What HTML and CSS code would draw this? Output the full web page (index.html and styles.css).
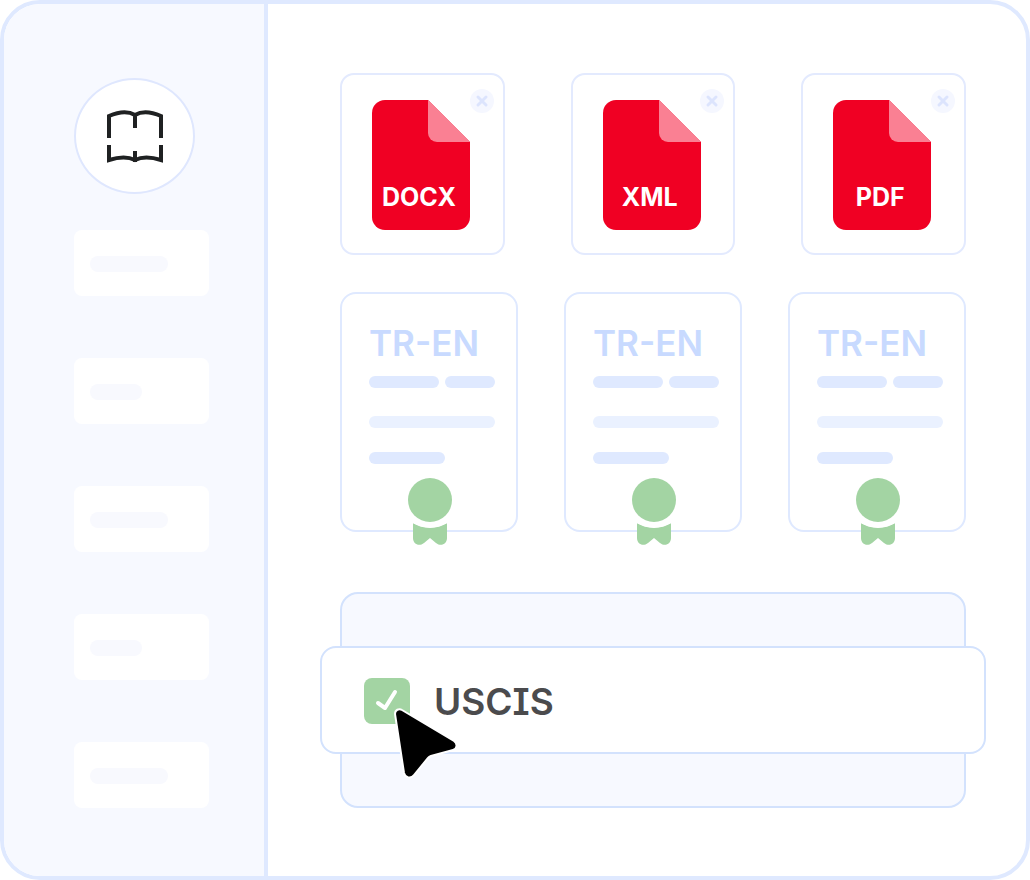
FILE: index.html
```html
<!DOCTYPE html>
<html lang="en">
<head>
    <meta charset="UTF-8">
    <meta name="viewport" content="width=device-width, initial-scale=1.0">
    <title>Translations</title>
    <link rel="stylesheet" href="styles.css">
</head>

<body>
    <!-- Shared shapes -->
    <svg class="sprite" aria-hidden="true">
        <symbol id="file" viewBox="0 0 98 130">
            <path d="M13 0H56L98 42V117a13 13 0 0 1-13 13H13a13 13 0 0 1-13-13V13A13 13 0 0 1 13 0z" fill="#f00023"/>
            <path d="M56 0L98 42H65a9 9 0 0 1-9-9z" fill="#fa8093"/>
        </symbol>
        <symbol id="cross" viewBox="0 0 24 24">
            <path d="M8 8L16 16M16 8L8 16" fill="none" stroke="#dce4fd" stroke-width="3" stroke-linecap="round"/>
        </symbol>
        <symbol id="ribbon" viewBox="0 0 44 67">
            <circle cx="22" cy="22" r="22" fill="#a3d4a3"/>
            <path d="M5 45Q22 54 39 45V60C39 66 33 69 28 65L22 60L16 65C11 69 5 66 5 60z" fill="#a3d4a3"/>
            <path d="M3 43Q22 55 41 43" fill="none" stroke="#fff" stroke-width="2"/>
        </symbol>
    </svg>

    <div class="frame">
        <aside class="sidebar">
            <div class="logo">
                <svg width="56" height="54" viewBox="0 0 56 54" fill="none" stroke="#1f2122" stroke-width="4">
                    <path d="M2 29V7Q18 0 28 6Q38 0 54 7V29M28 5V19"/>
                    <path d="M2 36V51Q18 46 28 51Q38 46 54 51V36M28 53V42"/>
                </svg>
            </div>
            <nav class="menu">
                <div class="menu-item"><span class="long"></span></div>
                <div class="menu-item"><span></span></div>
                <div class="menu-item"><span class="long"></span></div>
                <div class="menu-item"><span></span></div>
                <div class="menu-item"><span class="long"></span></div>
            </nav>
        </aside>

        <main class="content">
            <div class="files">
                <div class="file-card">
                    <div class="file-icon"><svg><use href="#file"/></svg><span>DOCX</span></div>
                    <button class="close" aria-label="Remove DOCX"><svg><use href="#cross"/></svg></button>
                </div>
                <div class="file-card">
                    <div class="file-icon"><svg><use href="#file"/></svg><span>XML</span></div>
                    <button class="close" aria-label="Remove XML"><svg><use href="#cross"/></svg></button>
                </div>
                <div class="file-card">
                    <div class="file-icon"><svg><use href="#file"/></svg><span>PDF</span></div>
                    <button class="close" aria-label="Remove PDF"><svg><use href="#cross"/></svg></button>
                </div>
            </div>

            <div class="docs">
                <div class="doc">
                    <h2>TR-EN</h2>
                    <div class="line split"><i></i><i></i></div>
                    <div class="line light"></div>
                    <div class="line short"></div>
                    <svg class="ribbon"><use href="#ribbon"/></svg>
                </div>
                <div class="doc">
                    <h2>TR-EN</h2>
                    <div class="line split"><i></i><i></i></div>
                    <div class="line light"></div>
                    <div class="line short"></div>
                    <svg class="ribbon"><use href="#ribbon"/></svg>
                </div>
                <div class="doc">
                    <h2>TR-EN</h2>
                    <div class="line split"><i></i><i></i></div>
                    <div class="line light"></div>
                    <div class="line short"></div>
                    <svg class="ribbon"><use href="#ribbon"/></svg>
                </div>
            </div>

            <div class="stack">
                <div class="option">
                    <div class="check">
                        <input type="checkbox" id="uscis" checked>
                        <svg class="tick" viewBox="0 0 46 46"><path d="M14 25L21 30L31 14" fill="none" stroke="#fff" stroke-width="4" stroke-linecap="round" stroke-linejoin="round"/></svg>
                        <svg class="pointer" viewBox="0 0 64 74">
                            <path d="M1 6C1 2 5 0 8 2L60 33C64 36 63 41 59 42L37 48Q35 49 34 50L20 67C17 71 11 70 10 65z" fill="#000" stroke="#fff" stroke-width="2"/>
                        </svg>
                    </div>
                    <label for="uscis">USCIS</label>
                </div>
            </div>
        </main>
    </div>
</body>

</html>
```
FILE: styles.css
```css
/* General styles */
* {
    box-sizing: border-box;
}

body {
    margin: 0;
    font-family: Inter, "Liberation Sans", sans-serif;
    background-color: #fff;
}

svg {
    display: block;
}

.sprite {
    position: absolute;
    width: 0;
    height: 0;
}

.frame {
    display: flex;
    min-height: 100vh;
    border: 4px solid #dfe9ff;
    border-radius: 40px;
    background-color: #fff;
    overflow: hidden;
}

/* Sidebar */
.sidebar {
    flex: none;
    width: 264px;
    padding: 74px 55px 66px 70px;
    border-right: 4px solid #dfe9ff;
    background-color: #f7f9ff;
}

.logo {
    display: flex;
    align-items: center;
    justify-content: center;
    width: 121px;
    height: 116px;
    margin-bottom: 36px;
    border: 2px solid #dfe7fe;
    border-radius: 50%;
    background-color: #fff;
}

.menu {
    display: flex;
    flex-direction: column;
    gap: 62px;
}

.menu-item {
    padding: 26px 16px 24px;
    border-radius: 8px;
    background-color: #fff;
}

.menu-item span {
    display: block;
    width: 52px;
    height: 16px;
    border-radius: 8px;
    background-color: #f8f9fe;
}

.menu-item .long {
    width: 78px;
}

/* Main area */
.content {
    flex: 1;
    padding: 69px 60px 68px 72px;
}

.files {
    display: grid;
    grid-template-columns: repeat(3, 1fr);
    gap: 66px;
    margin-bottom: 37px;
}

.file-card {
    position: relative;
    padding: 25px 30px 23px;
    border: 2px solid #e3eafe;
    border-radius: 14px;
}

.file-icon {
    display: grid;
    width: 98px;
    height: 130px;
}

.file-icon svg,
.file-icon span {
    grid-area: 1 / 1;
    width: 98px;
    height: 130px;
}

.file-icon span {
    padding: 81px 4px 0 0;
    color: #fff;
    font-size: 25px;
    font-weight: 700;
    line-height: 32px;
    text-align: center;
}

.close {
    position: absolute;
    top: 14px;
    right: 9px;
    width: 24px;
    height: 24px;
    padding: 0;
    border: none;
    border-radius: 50%;
    background-color: #f5f7ff;
    cursor: pointer;
}

.close svg {
    width: 24px;
    height: 24px;
}

/* Translated documents */
.docs {
    display: grid;
    grid-template-columns: repeat(3, 1fr);
    gap: 46px;
    margin-bottom: 60px;
}

.doc {
    position: relative;
    padding: 29px 21px 66px 27px;
    border: 2px solid #dfe9ff;
    border-radius: 16px;
}

.doc h2 {
    margin: 0 0 13px;
    color: #c8daff;
    font-size: 35px;
    font-weight: 600;
    line-height: 40px;
    white-space: nowrap;
}

.line {
    height: 12px;
    border-radius: 6px;
    background-color: #dfe9ff;
}

.split {
    display: grid;
    grid-template-columns: 7fr 5fr;
    gap: 6px;
    background: none;
}

.split i {
    border-radius: 6px;
    background-color: #dfe9ff;
}

.light {
    margin: 28px 0 24px;
    background-color: #eaf1ff;
}

.short {
    width: 60%;
}

.ribbon {
    position: absolute;
    bottom: -15px;
    left: calc(50% - 21px);
    width: 44px;
    height: 67px;
}

/* Selected option */
.stack {
    padding: 52px 0;
    border: 2px solid #d3e2fd;
    border-radius: 18px;
    background-color: #f7f9ff;
}

.option {
    display: flex;
    align-items: center;
    gap: 24px;
    margin: 0 -22px;
    padding: 30px 42px 28px;
    border: 2px solid #d3e2fd;
    border-radius: 16px;
    background-color: #fff;
}

.check {
    position: relative;
    width: 46px;
    height: 46px;
}

.check input {
    appearance: none;
    width: 46px;
    height: 46px;
    margin: 0;
    border-radius: 8px;
    background-color: #a3d4a3;
    cursor: pointer;
}

.tick {
    position: absolute;
    top: 0;
    left: 0;
    width: 46px;
    height: 46px;
    pointer-events: none;
}

.pointer {
    position: absolute;
    top: 30px;
    left: 30px;
    width: 64px;
    height: 74px;
    overflow: visible;
    pointer-events: none;
}

.option label {
    padding-top: 2px;
    color: #4b4b4d;
    font-size: 37px;
    font-weight: 600;
    line-height: 44px;
    /* capital I with serifs */
    font-feature-settings: "cv08", "ss02";
}
```
